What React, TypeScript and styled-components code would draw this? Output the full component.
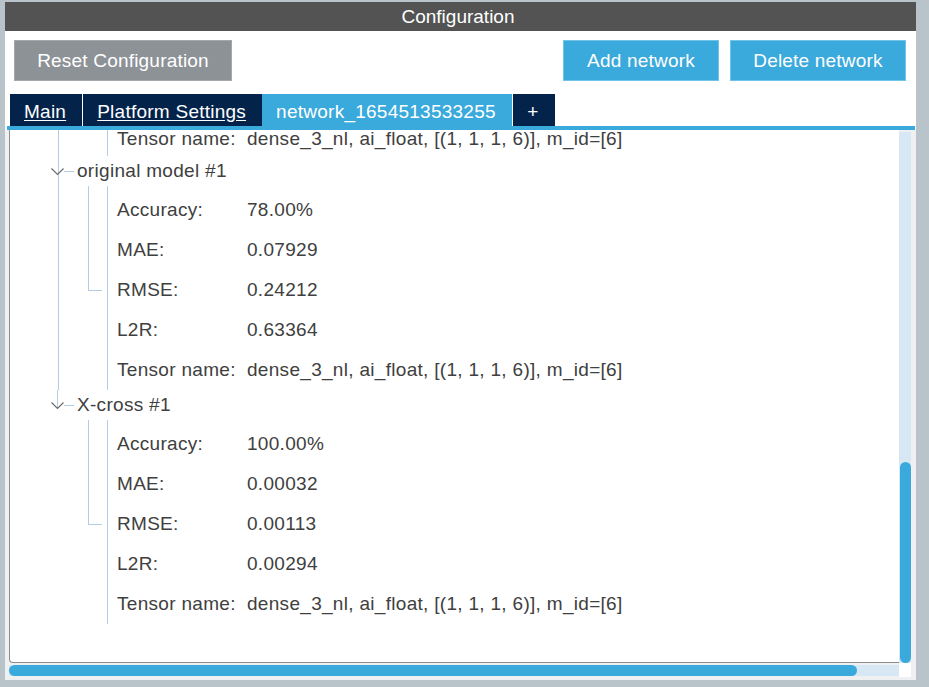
import React from "react";
import styled, { createGlobalStyle } from "styled-components";

const GlobalStyle = createGlobalStyle`
  html, body { margin: 0; padding: 0; }
  body {
    background: #b9c4ca;
    font-family: "Liberation Sans", Arial, sans-serif;
    overflow: hidden;
  }
`;

const LINE = "#b4cce4";
const TEXT = "#404040";

const Window = styled.div`
  margin: 2px 13px 0 5px;
  height: 678px;
  display: flex;
  flex-direction: column;
`;

const TitleBar = styled.div`
  height: 29px;
  padding-right: 5px;
  background: #525352;
  color: #fff;
  font-size: 19px;
  display: flex;
  align-items: center;
  justify-content: center;
`;

const Panel = styled.div`
  flex: 1;
  background: #fff;
  display: flex;
  flex-direction: column;
  min-height: 0;
`;

const ButtonRow = styled.div`
  display: flex;
  padding: 9px 10px 0 9px;
  gap: 11px;
`;

const Spacer = styled.div`
  flex: 1;
`;

const Button = styled.button<{ $variant: "gray" | "blue"; $w: number }>`
  width: ${(p) => p.$w}px;
  height: 41px;
  box-sizing: border-box;
  border: 1px solid ${(p) => (p.$variant === "gray" ? "#a3a8ac" : "#72c3e8")};
  background: ${(p) => (p.$variant === "gray" ? "#8d9297" : "#3aa9dc")};
  color: #fff;
  font-family: "Liberation Sans", Arial, sans-serif;
  font-size: 19px;
  letter-spacing: 0.2px;
  padding: 0;
  display: flex;
  align-items: center;
  justify-content: center;
`;

const TabBar = styled.div`
  margin: 13px 1px 0 2px;
  padding-left: 3px;
  display: flex;
  gap: 1px;
  border-bottom: 4px solid #3aa9dc;
`;

const Tab = styled.div<{ $active?: boolean; $plain?: boolean }>`
  height: 32px;
  box-sizing: border-box;
  padding: 0 16px 3px 14px;
  min-width: 42px;
  display: flex;
  align-items: flex-end;
  justify-content: center;
  background: ${(p) => (p.$active ? "#3aa9dc" : "#03234b")};
  color: #fff;
  font-size: 19px;
  letter-spacing: 0.25px;
  text-decoration: ${(p) => (p.$active || p.$plain ? "none" : "underline")};
  text-underline-offset: 2px;
  margin-left: ${(p) => (p.$active ? "-1px" : "0")};
`;

const ContentWrap = styled.div`
  flex: 1;
  min-height: 0;
  background: #eef0f2;
  padding: 0 5px 3px 4px;
  display: grid;
  grid-template-columns: 1fr 12px;
  grid-template-rows: 1fr 14px;
`;

const Viewport = styled.div`
  background: #fff;
  border-left: 1px solid #8e8e8e;
  border-bottom: 1px solid #8e8e8e;
  border-bottom-left-radius: 4px;
  overflow: hidden;
  color: ${TEXT};
  font-size: 19px;
  letter-spacing: 0.3px;
`;

const TreeContent = styled.div`
  margin-top: -9px;
  padding-left: 48px;
`;

const Node = styled.div<{ $last?: boolean }>`
  border-left: 1px solid ${(p) => (p.$last ? "transparent" : LINE)};
`;

const NodeHeader = styled.div`
  height: 30px;
  display: flex;
  align-items: center;
`;

const Connector = styled.svg`
  margin-left: -10px;
  width: 27px;
  height: 30px;
  flex: none;
`;

const NodeLabel = styled.span`
  margin-left: 1px;
  white-space: nowrap;
`;

const Children = styled.div`
  display: flex;
  padding-left: 29px;
`;

const Elbow = styled.div`
  flex: none;
  box-sizing: border-box;
  width: 14px;
  height: 105px;
  border-left: 1px solid ${LINE};
  border-bottom: 1px solid ${LINE};
`;

const Rows = styled.div<{ $pad?: number; $offset?: number }>`
  margin-left: ${(p) => p.$offset ?? 5}px;
  border-left: 1px solid ${LINE};
  padding-top: ${(p) => p.$pad ?? 4}px;
  padding-left: 9px;
`;

const Row = styled.div<{ $h?: number }>`
  height: ${(p) => p.$h ?? 40}px;
  display: flex;
  align-items: center;
  white-space: nowrap;
`;

const Key = styled.span`
  width: 130px;
  flex: none;
`;

const VTrack = styled.div`
  margin-top: 2px;
  background: #d8e7f4;
  display: flex;
  flex-direction: column;
`;

const VThumb = styled.div`
  margin-top: auto;
  height: 201px;
  margin-left: 1px;
  background: #3aa9dc;
  border-radius: 6px;
`;

const HTrack = styled.div`
  padding-top: 2px;
`;

const HTrackInner = styled.div`
  height: 11px;
  background: #d8e7f4;
  display: flex;
`;

const HThumb = styled.div`
  width: 848px;
  background: #3aa9dc;
  border-radius: 6px;
`;

const Corner = styled.div`
  background: #fff;
`;

const ExpandConnector = ({ last }: { last?: boolean }) => (
  <Connector viewBox="0 0 27 30">
    {last && <line x1="8.5" y1="0" x2="8.5" y2="18" stroke={LINE} strokeWidth="1" />}
    <line x1="15" y1="15.5" x2="25" y2="15.5" stroke={LINE} strokeWidth="1" />
    <polyline
      points="2.5,12.5 8.5,18.5 14.5,12.5"
      fill="none"
      stroke="#6b6b6b"
      strokeWidth="1.2"
    />
  </Connector>
);

type Metric = [string, string];

const tensor = "dense_3_nl, ai_float, [(1, 1, 1, 6)], m_id=[6]";

const models: { name: string; metrics: Metric[] }[] = [
  {
    name: "original model #1",
    metrics: [
      ["Accuracy:", "78.00%"],
      ["MAE:", "0.07929"],
      ["RMSE:", "0.24212"],
      ["L2R:", "0.63364"],
      ["Tensor name:", tensor],
    ],
  },
  {
    name: "X-cross #1",
    metrics: [
      ["Accuracy:", "100.00%"],
      ["MAE:", "0.00032"],
      ["RMSE:", "0.00113"],
      ["L2R:", "0.00294"],
      ["Tensor name:", tensor],
    ],
  },
];

export default function App() {
  return (
    <>
      <GlobalStyle />
      <Window>
        <TitleBar>Configuration</TitleBar>
        <Panel>
          <ButtonRow>
            <Button $variant="gray" $w={218}>Reset Configuration</Button>
            <Spacer />
            <Button $variant="blue" $w={156}>Add network</Button>
            <Button $variant="blue" $w={176}>Delete network</Button>
          </ButtonRow>
          <TabBar>
            <Tab>Main</Tab>
            <Tab>Platform Settings</Tab>
            <Tab $active>network_1654513533255</Tab>
            <Tab $plain>+</Tab>
          </TabBar>
          <ContentWrap>
            <Viewport>
              <TreeContent>
                <Node>
                  <Rows $pad={0} $offset={48}>
                    <Row $h={35}>
                      <Key>Tensor name:</Key>
                      <span>{tensor}</span>
                    </Row>
                  </Rows>
                </Node>
                {models.map((m, i) => {
                  const last = i === models.length - 1;
                  return (
                    <Node key={m.name} $last={last}>
                      <NodeHeader>
                        <ExpandConnector last={last} />
                        <NodeLabel>{m.name}</NodeLabel>
                      </NodeHeader>
                      <Children>
                        <Elbow />
                        <Rows>
                          {m.metrics.map(([k, v]) => (
                            <Row key={k}>
                              <Key>{k}</Key>
                              <span>{v}</span>
                            </Row>
                          ))}
                        </Rows>
                      </Children>
                    </Node>
                  );
                })}
              </TreeContent>
            </Viewport>
            <VTrack>
              <VThumb />
            </VTrack>
            <HTrack>
              <HTrackInner>
                <HThumb />
              </HTrackInner>
            </HTrack>
            <Corner />
          </ContentWrap>
        </Panel>
      </Window>
    </>
  );
}
